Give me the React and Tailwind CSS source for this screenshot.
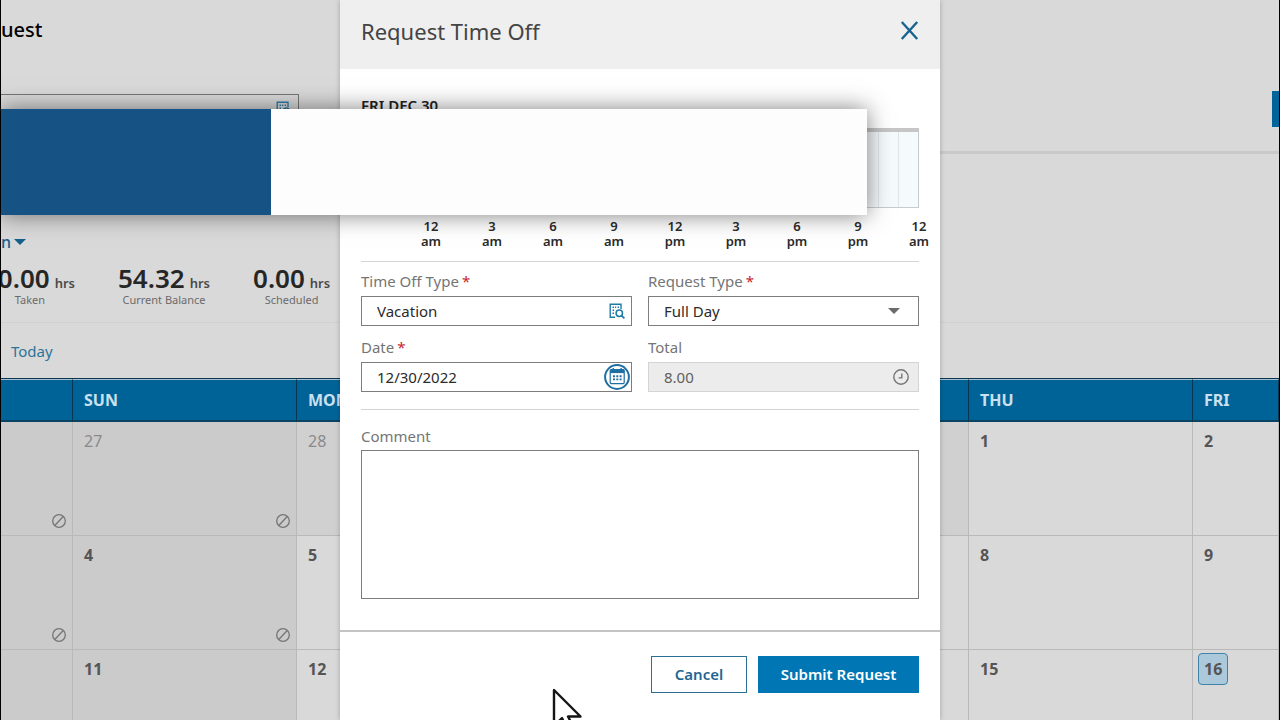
import React, { useState } from "react";
import clsx from "clsx";

const weeks = [
  [
    { off: true },
    { day: "27", off: true, muted: true },
    { day: "28", muted: true },
    { muted: true },
    { muted: true },
    { day: "1" },
    { day: "2" },
  ],
  [
    { off: true },
    { day: "4", off: true },
    { day: "5" },
    {},
    {},
    { day: "8" },
    { day: "9" },
  ],
  [
    { off: true },
    { day: "11", off: true },
    { day: "12" },
    {},
    {},
    { day: "15" },
    { day: "16", today: true },
  ],
];

const weekDays = ["", "SUN", "MON", "", "", "THU", "FRI"];

const balances = [
  { value: "0.00", label: "Taken" },
  { value: "54.32", label: "Current Balance" },
  { value: "0.00", label: "Scheduled" },
];

const hours = ["12 am", "3 am", "6 am", "9 am", "12 pm", "3 pm", "6 pm", "9 pm", "12 am"];

const LookupIcon = () => (
  <svg width="16" height="16" viewBox="0 0 16 16" fill="none" stroke="currentColor">
    <path d="M6 14.3H1.2V1.2H12V6" strokeWidth="1.4" />
    <path d="M3.5 4.2H5M6 4.2H7.2M8.6 4.2H10M3.5 7.2H5M3.5 10.2H5" strokeWidth="1.4" />
    <circle cx="10.3" cy="10.3" r="3.2" strokeWidth="1.5" />
    <path d="M12.7 12.7L15.4 15.4" strokeWidth="1.7" />
  </svg>
);

const CalendarIcon = () => (
  <svg width="26" height="26" viewBox="0 0 26 26" fill="none" stroke="currentColor">
    <circle cx="13" cy="13" r="11.9" strokeWidth="2" />
    <rect x="6.2" y="5.6" width="14" height="14" rx="1" strokeWidth="1.2" />
    <path d="M6.2 7.4H20.2" strokeWidth="3.4" />
    <path d="M9.3 4V7.4M17.1 4V7.4" strokeWidth="1.4" />
    <path d="M9 12.2H17.6M9 15.4H17.6" strokeWidth="1.9" strokeDasharray="2 1.3" />
  </svg>
);

const ClockIcon = () => (
  <svg width="16" height="16" viewBox="0 0 16 16" fill="none" stroke="currentColor" strokeWidth="1.4">
    <circle cx="8" cy="8" r="7.2" />
    <path d="M8.8 4.6V8.9H5.6" />
  </svg>
);

const BlockedIcon = () => (
  <svg width="14" height="14" viewBox="0 0 14 14" fill="none" stroke="currentColor" strokeWidth="1.3">
    <circle cx="7" cy="7" r="6.3" />
    <path d="M3 11.2L11 2.8" />
  </svg>
);

const CaretIcon = () => (
  <svg width="12" height="6" viewBox="0 0 12 6" fill="currentColor">
    <path d="M0 0H12L6 6Z" />
  </svg>
);

const FieldLabel = ({ htmlFor, required, children }) => (
  <label htmlFor={htmlFor} className="flex gap-[3px] text-[15px] leading-5 text-[#757575]">
    {children}
    {required && <span className="text-[#c9252d]">*</span>}
  </label>
);

const Calendar = () => (
  <table className="mt-[15px] w-full table-fixed border-separate border-spacing-0 border-t border-[#0b3550]">
    <colgroup>
      <col className="w-[72px]" />
      <col />
      <col />
      <col />
      <col />
      <col />
      <col className="w-[86px]" />
    </colgroup>
    <thead>
      <tr className="h-[43px]">
        {weekDays.map((name, i) => (
          <th
            key={i}
            scope="col"
            className="border-b-2 border-r border-t border-b-[#0b4364] border-r-[#0b3550] border-t-[#a9c3d2] bg-[#006398] pl-[11px] text-left text-base font-bold text-[#c9e0ee]"
          >
            {name}
          </th>
        ))}
      </tr>
    </thead>
    <tbody>
      {weeks.map((week, w) => (
        <tr key={w}>
          {week.map((cell, i) => (
            <td
              key={i}
              className={clsx(
                "h-[114px] border-b border-r border-[#b9b9b9] p-0",
                cell.off ? "bg-[#cbcbcb]" : cell.muted ? "bg-[#d0d0d0]" : "bg-[#d9d9d9]"
              )}
            >
              <div className="flex h-[113px] flex-col justify-between pb-[7px] pl-[5px] pr-1.5 pt-[3px]">
                <span
                  className={clsx(
                    "flex h-8 items-center self-start rounded-sm border px-[5px] text-base",
                    cell.muted ? "text-[#8a8a8a]" : "font-bold text-[#555555]",
                    cell.today ? "border-[#3f84a8] bg-[#abc9da]" : "border-transparent"
                  )}
                >
                  {cell.day}
                </span>
                {cell.off && (
                  <span className="self-end text-[#757575]">
                    <BlockedIcon />
                  </span>
                )}
              </div>
            </td>
          ))}
        </tr>
      ))}
    </tbody>
  </table>
);

const TimeOffPage = () => (
  <main className="flex flex-col">
    <h1 className="pt-4 text-xl font-medium leading-7 text-black">uest</h1>

    <div className="mt-[47px] flex h-9 items-center justify-between">
      <div className="flex h-[30px] w-[298px] items-center border border-l-0 border-[#777777] pr-1.5 text-[#2b7ea8]">
        <input type="text" aria-label="Search" className="min-w-0 flex-1 bg-transparent outline-none" />
        <button aria-label="Look up">
          <LookupIcon />
        </button>
      </div>
      <button aria-label="Request" className="h-9 w-[7px] bg-[#00639a]" />
    </div>

    <div className="mt-6 h-[3px] bg-[#c9c9c9]" />

    <button className="mt-[76px] flex items-center gap-[3px] self-start text-base font-medium leading-6 text-[#15608c]">
      n
      <CaretIcon />
    </button>

    <div className="-ml-4 mt-[10px] flex gap-[43px]">
      {balances.map((item) => (
        <div key={item.label} className="min-w-[76px] first:min-w-[90px]">
          <div className="flex items-baseline justify-end gap-[5px] font-semibold">
            <span className="text-[26px] leading-7 text-[#262626]">{item.value}</span>
            <span className="text-[13px] leading-4 text-[#4a4a4a]">hrs</span>
          </div>
          <div className="text-center text-[11px] leading-4 text-[#6b6b6b]">{item.label}</div>
        </div>
      ))}
    </div>

    <div className="mt-[14px] h-px bg-[#d1d1d1]" />

    <a href="#today" className="ml-2.5 mt-4 self-start text-[15px] leading-6 text-[#2b7499]">
      Today
    </a>

    <Calendar />
  </main>
);

const RequestDialog = () => {
  const [type, setType] = useState("Vacation");
  const [date, setDate] = useState("12/30/2022");
  const [comment, setComment] = useState("");

  return (
    <div className="absolute inset-0 flex justify-center">
      <div
        role="dialog"
        aria-labelledby="dialog-title"
        className="flex w-full max-w-[600px] flex-col bg-white shadow-[0_0_5px_rgba(0,0,0,0.25)]"
      >
        <div className="flex h-[69px] items-center justify-between bg-[#efefef] px-[21px] pb-2">
          <h2 id="dialog-title" className="text-[22px] leading-7 text-[#444444]">
            Request Time Off
          </h2>
          <button aria-label="Close" className="text-[#17638f]">
            <svg width="19" height="19" viewBox="0 0 19 19" fill="none" stroke="currentColor" strokeWidth="2.4">
              <path d="M1.8 1L17.2 18M17.2 1L1.8 18" />
            </svg>
          </button>
        </div>

        <div className="px-[21px] pt-[26px]">
          <h3 className="text-[15px] font-semibold leading-5 text-[#222222]">FRI DEC 30</h3>

          {/* Day timeline */}
          <div className="ml-[70px] mt-[13px] flex h-20 border border-t-4 border-[#c6cbd0] border-t-[#c6c6c6] bg-[#f5fafd]">
            {Array.from({ length: 24 }, (_, i) => (
              <div key={i} className="flex-1 border-r border-[#e0e6ea] last:border-r-0" />
            ))}
          </div>
          <div className="-mr-3 ml-[58px] mt-[11px] flex justify-between text-center text-[13px] font-semibold leading-[15px] text-[#2b2b2b]">
            {hours.map((hour, i) => (
              <span key={i} className="w-6">
                {hour}
              </span>
            ))}
          </div>

          <div className="mt-3 grid grid-cols-2 gap-x-4 gap-y-[11px] border-y border-[#d4d4d4] pb-[17px] pt-[9px]">
            <div className="flex flex-col gap-[5px]">
              <FieldLabel htmlFor="time-off-type" required>
                Time Off Type
              </FieldLabel>
              <div className="flex h-[30px] items-center border border-[#7d7d7d] pr-1.5">
                <input
                  id="time-off-type"
                  type="text"
                  value={type}
                  onChange={(e) => setType(e.target.value)}
                  className="min-w-0 flex-1 pl-[15px] text-[15px] text-[#2b2b2b] outline-none"
                />
                <button aria-label="Look up time off type" className="text-[#1d7aa8]">
                  <LookupIcon />
                </button>
              </div>
            </div>

            <div className="flex flex-col gap-[5px]">
              <FieldLabel htmlFor="request-type" required>
                Request Type
              </FieldLabel>
              <div className="relative">
                <select
                  id="request-type"
                  className="block h-[30px] w-full appearance-none border border-[#7d7d7d] bg-white pl-[15px] text-[15px] text-[#2b2b2b] outline-none"
                >
                  <option>Full Day</option>
                </select>
                <span className="pointer-events-none absolute inset-y-0 right-[19px] flex items-center text-[#6b6b6b]">
                  <CaretIcon />
                </span>
              </div>
            </div>

            <div className="flex flex-col gap-[5px]">
              <FieldLabel htmlFor="date" required>
                Date
              </FieldLabel>
              <div className="flex h-[30px] items-center border border-[#7d7d7d] pr-px">
                <input
                  id="date"
                  type="text"
                  value={date}
                  onChange={(e) => setDate(e.target.value)}
                  className="min-w-0 flex-1 pl-[15px] text-[15px] text-[#2b2b2b] outline-none"
                />
                <button aria-label="Pick a date" className="text-[#1f6fa3]">
                  <CalendarIcon />
                </button>
              </div>
            </div>

            <div className="flex flex-col gap-[5px]">
              <FieldLabel htmlFor="total">Total</FieldLabel>
              <div className="flex h-[30px] items-center border border-[#d4d4d4] bg-[#ececec] pr-[9px] text-[#757575]">
                <input
                  id="total"
                  type="text"
                  value="8.00"
                  readOnly
                  className="min-w-0 flex-1 bg-transparent pl-[15px] text-[15px] text-[#606060] outline-none"
                />
                <ClockIcon />
              </div>
            </div>
          </div>

          <div className="flex flex-col gap-1 pt-4">
            <FieldLabel htmlFor="comment">Comment</FieldLabel>
            <textarea
              id="comment"
              value={comment}
              onChange={(e) => setComment(e.target.value)}
              className="block h-[149px] w-full resize-none border border-[#7d7d7d] outline-none"
            />
          </div>
        </div>

        <div className="mt-[31px] flex justify-end gap-[11px] border-t-2 border-[#c4c4c4] px-[21px] pt-6">
          <button className="h-[37px] w-24 border border-[#2b6f96] text-[15px] font-semibold text-[#1f6793]">
            Cancel
          </button>
          <button className="h-[37px] w-[161px] bg-[#0076b4] text-[15px] font-semibold text-white">
            Submit Request
          </button>
        </div>
      </div>
    </div>
  );
};

const Banner = () => (
  <div className="absolute left-0 top-[109px] flex h-[106px] w-[866px] shadow-[0_0_22px_rgba(0,0,0,0.5)]">
    <div className="w-[270px] bg-[#175284]" />
    <div className="flex-1 bg-[#fefdfe]" />
  </div>
);

const Pointer = () => (
  <svg
    className="absolute left-[551px] top-[688px]"
    width="32"
    height="44"
    viewBox="0 0 32 44"
    fill="white"
    stroke="#151515"
    strokeWidth="2.4"
    strokeLinejoin="round"
  >
    <path d="M2 2V38L10 30L15 41L21 38L16 28.5H28.5Z" />
  </svg>
);

const App = () => (
  <div className="relative h-screen overflow-hidden border-x border-black bg-[#d9d9d9] font-['Noto_Sans',sans-serif]">
    <TimeOffPage />
    <RequestDialog />
    <Banner />
    <Pointer />
  </div>
);

export default App;
